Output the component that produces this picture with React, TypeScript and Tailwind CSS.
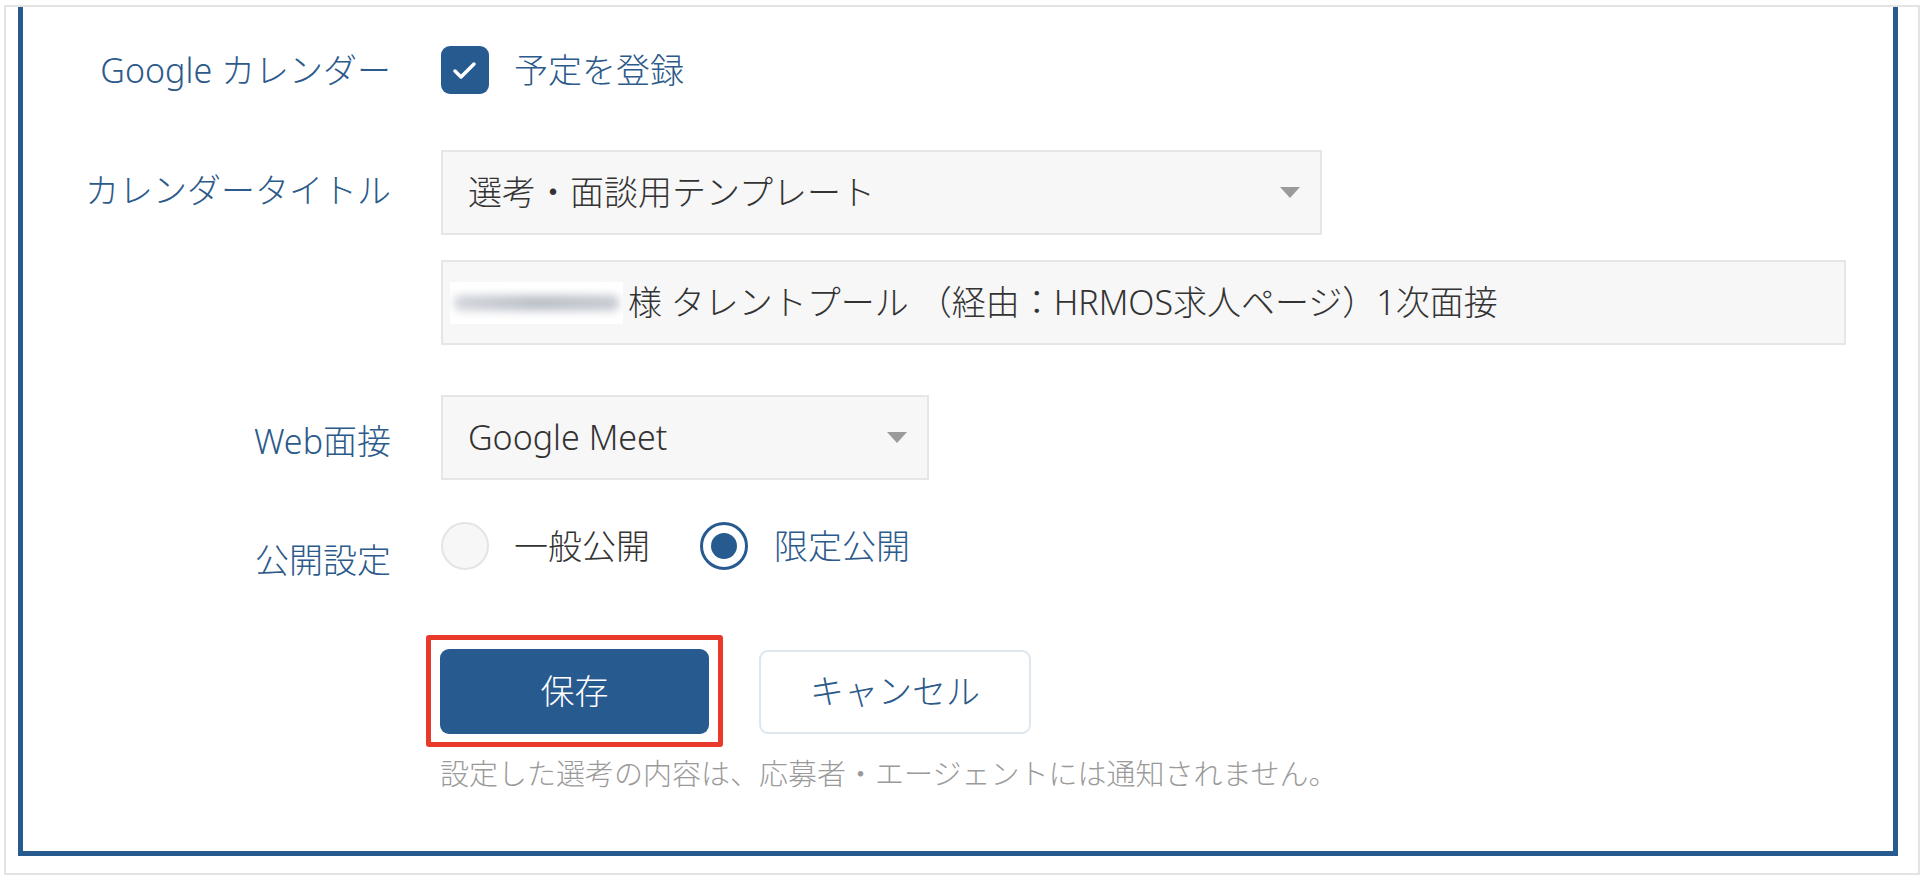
import { type ReactNode } from 'react';

const blue = 'text-[#2c5a8a]';

function Label({ children, className = '' }: { children: ReactNode; className?: string }) {
    return (
        <div className={`w-[368px] shrink-0 text-right text-[34px] leading-[48px] ${blue} ${className}`}>{children}</div>
    );
}

function Caret() {
    return (
        <svg width="20" height="11" viewBox="0 0 20 11" className="shrink-0">
            <polygon points="0,0 20,0 10,11" fill="#9b9b9b" />
        </svg>
    );
}

function Select({ value, width }: { value: string; width: string }) {
    return (
        <div
            className={`${width} flex h-[85px] items-center justify-between border-2 border-[#e6e6e6] bg-[#f7f7f7] pl-[25px] pr-[20px] text-[34px] text-[#333333]`}
        >
            <span>{value}</span>
            <Caret />
        </div>
    );
}

export default function App() {
    return (
        <div className="min-h-screen bg-white font-['Noto_Sans','Noto_Sans_CJK_JP',sans-serif] font-light">
            {/* outer frame */}
            <div className="ml-[4px] mt-[5px] h-[870px] w-[1916px] border-2 border-[#e3e3e3] bg-white pb-[17px] pl-[12px] pr-[20px]">
                {/* blue card, top edge cut off */}
                <div className="flex h-full flex-col border-x-[5px] border-b-[5px] border-[#275b90] pt-[39px]">
                    {/* Google カレンダー */}
                    <div className="flex items-center gap-[50px]">
                        <Label>Google カレンダー</Label>
                        <div className="flex items-center">
                            <div className="flex h-[48px] w-[48px] items-center justify-center rounded-[9px] bg-[#275b90]">
                                <svg width="48" height="48" viewBox="0 0 48 48">
                                    <polyline
                                        points="14,25 20,31 33,18"
                                        fill="none"
                                        stroke="#ffffff"
                                        strokeWidth="3.5"
                                        strokeLinecap="round"
                                        strokeLinejoin="round"
                                    />
                                </svg>
                            </div>
                            <span className={`ml-[25px] text-[34px] leading-[48px] ${blue}`}>予定を登録</span>
                        </div>
                    </div>

                    {/* カレンダータイトル */}
                    <div className="mt-[56px] flex items-start gap-[50px]">
                        <Label className="pt-[16px]">カレンダータイトル</Label>
                        <div className="flex flex-col">
                            <Select value="選考・面談用テンプレート" width="w-[881px]" />
                            <div className="mt-[25px] flex h-[85px] w-[1405px] items-center border-2 border-[#e6e6e6] bg-[#f7f7f7] pl-[7px] text-[34px] text-[#333333]">
                                {/* blurred name */}
                                <div className="flex h-[42px] w-[173px] items-center overflow-hidden bg-white px-[4px]">
                                    <div className="h-[16px] w-full rounded-[6px] bg-gradient-to-r from-[#d3d6dc] via-[#bcc1c9] to-[#c8ccd3] blur-[4px]" />
                                </div>
                                <span className="ml-[5px] whitespace-nowrap">様 タレントプール （経由：HRMOS求人ページ）1次面接</span>
                            </div>
                        </div>
                    </div>

                    {/* Web面接 */}
                    <div className="mt-[50px] flex items-center gap-[50px]">
                        <Label className="pt-[6px]">Web面接</Label>
                        <Select value="Google Meet" width="w-[488px]" />
                    </div>

                    {/* 公開設定 */}
                    <div className="mt-[42px] flex items-start gap-[50px]">
                        <Label className="pt-[14px]">公開設定</Label>
                        <div className="flex items-center">
                            <div className="h-[48px] w-[48px] rounded-full border-2 border-[#e4e4e4] bg-[#f7f7f7]" />
                            <span className="ml-[25px] text-[34px] leading-[48px] text-[#333333]">一般公開</span>
                            <div className="ml-[50px] flex h-[48px] w-[48px] items-center justify-center rounded-full border-[3px] border-[#275b90] bg-white">
                                <div className="h-[26px] w-[26px] rounded-full bg-[#275b90]" />
                            </div>
                            <span className={`ml-[26px] text-[34px] leading-[48px] ${blue}`}>限定公開</span>
                        </div>
                    </div>

                    {/* buttons */}
                    <div className="mt-[65px] flex items-center pl-[417px]">
                        <div className="relative">
                            <button className="flex h-[85px] w-[269px] items-center justify-center rounded-[9px] bg-[#275b90] text-[34px] text-white">
                                保存
                            </button>
                            {/* highlight annotation */}
                            <div className="pointer-events-none absolute -bottom-[13px] -left-[14px] -right-[14px] -top-[14px] rounded-[3px] border-[5px] border-[#e8392b]" />
                        </div>
                        <button className={`ml-[50px] flex h-[84px] w-[272px] items-center justify-center rounded-[9px] border-2 border-[#dfe7ee] bg-white text-[34px] ${blue}`}>
                            キャンセル
                        </button>
                    </div>

                    <p className="mt-[20px] pl-[417px] text-[29px] leading-[40px] text-[#9a9a9a]">
                        設定した選考の内容は、応募者・エージェントには通知されません。
                    </p>
                </div>
            </div>
        </div>
    );
}
